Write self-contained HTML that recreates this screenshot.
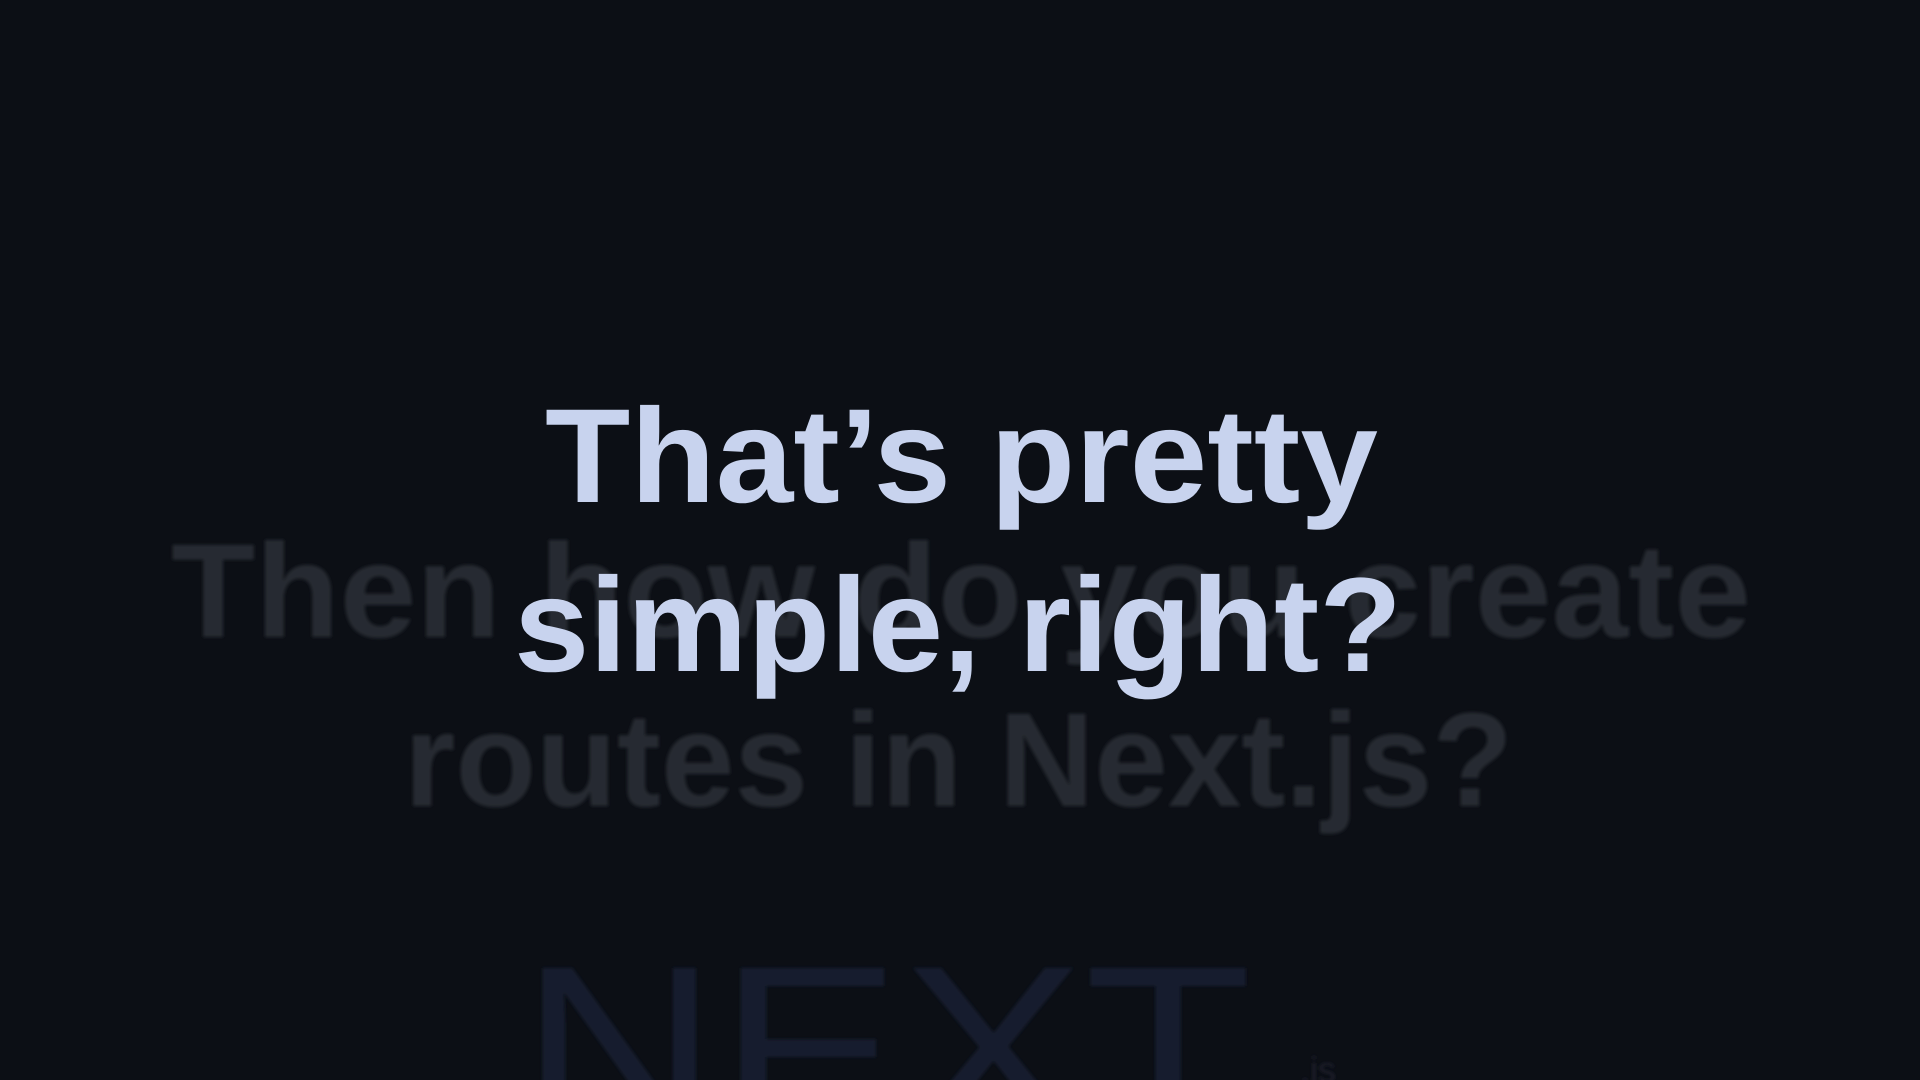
<!DOCTYPE html>
<html><head><meta charset="utf-8"><style>
html,body{margin:0;padding:0;background:#0c0f15;width:1920px;height:1080px;overflow:hidden}
svg{display:block}
</style></head><body>
<svg width="1920" height="1080" viewBox="0 0 1920 1080" xmlns="http://www.w3.org/2000/svg" overflow="hidden">
<defs><filter id="b" x="-5%" y="-20%" width="110%" height="140%"><feGaussianBlur stdDeviation="1.5"/></filter></defs>
<rect width="1920" height="1080" fill="#0c0f15"/>
<g font-family="Liberation Sans, sans-serif" font-weight="bold" font-size="134" fill="#272a31" filter="url(#b)">
<text x="171" y="637" textLength="1580" lengthAdjust="spacingAndGlyphs">Then how do you create</text>
<text x="404" y="806" textLength="1109" lengthAdjust="spacingAndGlyphs">routes in Next.js?</text>
</g>
<g font-family="Liberation Sans, sans-serif" font-size="240" fill="#171c2d" filter="url(#b)">
<text x="520" y="1133" textLength="732" lengthAdjust="spacingAndGlyphs">NEXT</text>
<text x="1300" y="1082" font-size="36" fill="#1b1f2c">.js</text>
</g>
<g font-family="Liberation Sans, sans-serif" font-weight="bold" font-size="134" fill="#c8d3ee">
<text x="545" y="502" textLength="833" lengthAdjust="spacingAndGlyphs">That’s pretty</text>
<text x="514" y="671" textLength="888" lengthAdjust="spacingAndGlyphs">simple, right?</text>
</g>
</svg>
</body></html>
